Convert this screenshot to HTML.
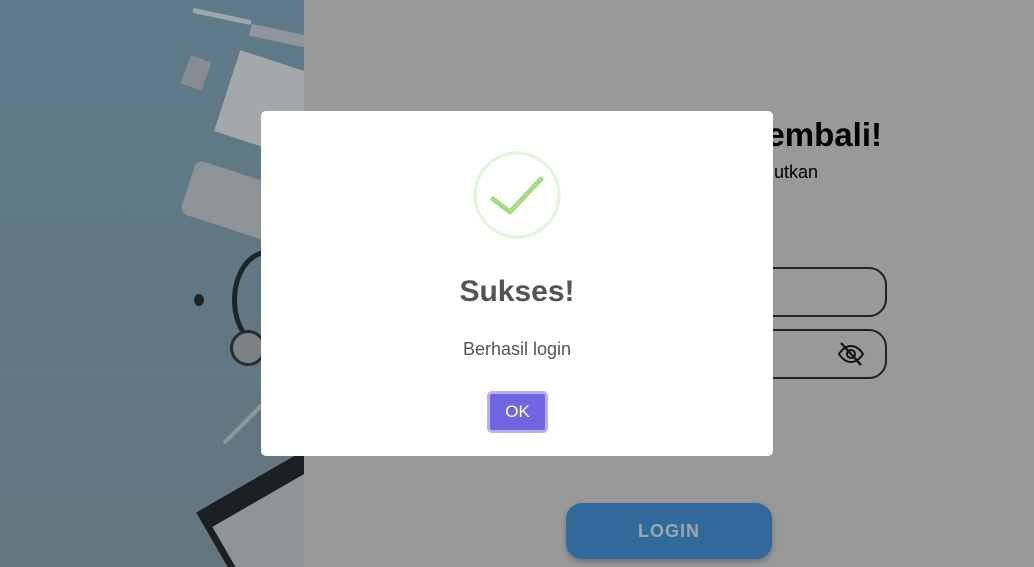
<!DOCTYPE html>
<html><head><meta charset="utf-8"><style>
*{margin:0;padding:0;box-sizing:border-box}
body{width:1034px;height:567px;overflow:hidden;position:relative;background:#999;font-family:"Liberation Sans",sans-serif}
.left{position:absolute;left:0;top:0;width:304px;height:567px;background:linear-gradient(180deg,#5e7a89 0%,#617884 60%,#65757f 100%);overflow:hidden}
.abs{position:absolute}
.h{position:absolute;right:152px;top:116px;font-size:33px;font-weight:bold;color:#000;white-space:nowrap}
.sub{position:absolute;right:216px;top:162px;font-size:18px;color:#000;white-space:nowrap}
.inp{position:absolute;left:600px;width:287px;height:50px;border:2px solid #222;border-radius:18px}
.login{position:absolute;left:566px;top:503px;width:206px;height:56px;background:#2f6a9b;border-radius:16px;color:#9aa7b3;font-weight:bold;font-size:18px;text-align:center;line-height:56px;letter-spacing:1px;box-shadow:0 3px 6px rgba(0,0,0,.25)}
.dlg{position:absolute;left:261px;top:111px;width:512px;height:345px;background:#fff;border-radius:5px}
.t{position:absolute;left:0;width:512px;text-align:center;color:#545454}
.ok{position:absolute;left:226px;top:280px;width:61px;height:42px;background:#7066e0;border:3px solid #b5b0f0;border-radius:5px;color:#fff;font-size:17px;text-align:center;line-height:36px}
</style></head><body>
<div class="left">
  <div class="abs" style="left:192px;top:14px;width:60px;height:5px;background:#9ea6aa;transform:rotate(12deg);border-radius:3px"></div>
  <div class="abs" style="left:250px;top:30px;width:60px;height:12px;background:#8f979b;transform:rotate(12deg)"></div>
  <div class="abs" style="left:185px;top:58px;width:22px;height:30px;background:#868c8f;transform:rotate(20deg)"></div>
  <div class="abs" style="left:225px;top:62px;width:90px;height:85px;background:#a4a8aa;transform:rotate(18deg)"></div>
  <div class="abs" style="left:186px;top:172px;width:90px;height:56px;background:#8e9396;border-radius:8px;transform:rotate(18deg)"></div>
  <div class="abs" style="left:232px;top:250px;width:70px;height:100px;border:5px solid #1f2326;border-radius:50%"></div>
  <div class="abs" style="left:194px;top:294px;width:10px;height:12px;background:#1f2326;border-radius:50%"></div>
  <div class="abs" style="left:230px;top:330px;width:36px;height:36px;background:#7c8184;border-radius:50%;border:3px solid #2a2d2f"></div>
  <div class="abs" style="left:215px;top:420px;width:60px;height:4px;background:#8f979b;transform:rotate(-45deg)"></div>
  <div class="abs" style="left:225px;top:470px;width:130px;height:150px;background:#1c1f21;transform:rotate(-30deg)"></div>
  <div class="abs" style="left:240px;top:490px;width:110px;height:140px;background:#8f9496;transform:rotate(-30deg)"></div>
</div>
<div class="h">Selamat Datang Kembali!</div>
<div class="sub">Silakan masuk untuk melanjutkan</div>
<div class="inp" style="top:267px"></div>
<div class="inp" style="top:329px"></div>
<svg class="abs" style="left:836px;top:340px" width="30" height="28" viewBox="0 0 30 28"><path d="M3 14c4-6 8-8 12-8s8 2 12 8c-4 6-8 8-12 8s-8-2-12-8z" fill="none" stroke="#111" stroke-width="2"/><circle cx="15" cy="14" r="4" fill="none" stroke="#111" stroke-width="2"/><path d="M5 3l20 22" stroke="#111" stroke-width="2.2"/></svg>
<div class="login">LOGIN</div>
<div class="dlg">
  <svg class="abs" style="left:211px;top:39px" width="90" height="90" viewBox="0 0 90 90"><circle cx="45" cy="45" r="42" fill="none" stroke="#e6f5dd" stroke-width="3.5"/><path d="M21 49l17 13 31-33" fill="none" stroke="#a5dc86" stroke-width="5" stroke-linecap="round" stroke-linejoin="round"/></svg>
  <div class="t" style="top:164px;font-size:30px;font-weight:bold">Sukses!</div>
  <div class="t" style="top:228px;font-size:18px">Berhasil login</div>
  <div class="ok">OK</div>
</div>
</body></html>
